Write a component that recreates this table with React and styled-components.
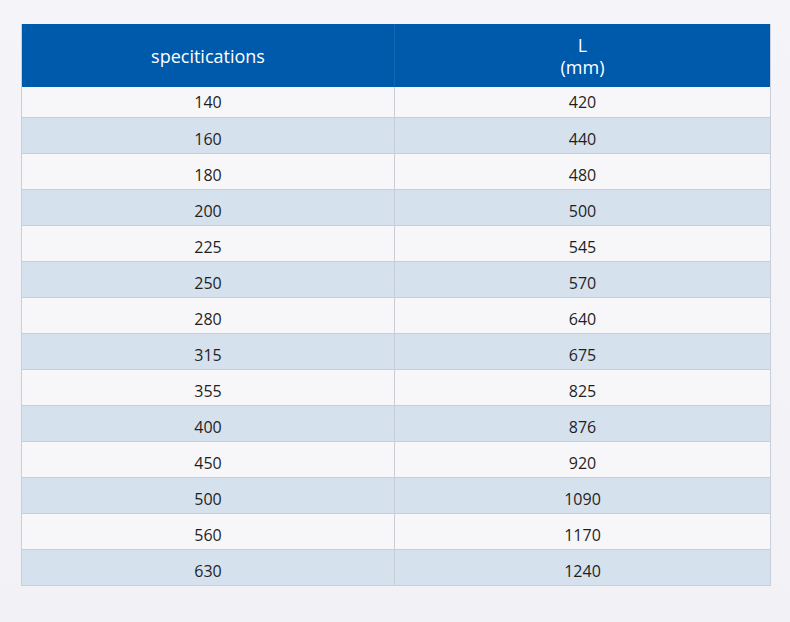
import React from "react";
import styled, { createGlobalStyle } from "styled-components";

const Global = createGlobalStyle`
  html, body { margin: 0; padding: 0; }
  body {
    background: linear-gradient(180deg, #f5f5f9 0%, #f1f1f6 100%);
    font-family: "Open Sans", "Noto Sans", sans-serif;
    width: 790px;
    height: 622px;
    overflow: hidden;
  }
`;

const Page = styled.div`
  padding: 24px 0 0 21px;
`;

const Table = styled.table`
  width: 750px;
  border-collapse: collapse;
  table-layout: fixed;
  border: 1px solid #c9ced8;
  border-top: none;
`;

const HeadCell = styled.th`
  background: #005aab;
  color: #ffffff;
  font-weight: 400;
  font-size: 18px;
  line-height: 22px;
  height: 63px;
  padding: 0;
  text-align: center;
  border-left: 1px solid #1467b3;
  &:first-child { border-left: none; }
`;

const Row = styled.tr`
  background: ${(p) => (p.$alt ? "#d6e1ee" : "#f7f7fa")};
  border-top: 1px solid #c8cdd6;
  &:first-child { border-top: none; }
`;

const Cell = styled.td`
  height: ${(p) => (p.$first ? "30px" : "28px")};
  padding: ${(p) => (p.$first ? "0" : "7px 0 0")};
  text-align: center;
  font-size: 16px;
  line-height: 22px;
  color: #1f1f1f;
  border-left: 1px solid #c8cdd6;
  &:first-child { border-left: none; }
`;

const data = [
  ["140", "420"],
  ["160", "440"],
  ["180", "480"],
  ["200", "500"],
  ["225", "545"],
  ["250", "570"],
  ["280", "640"],
  ["315", "675"],
  ["355", "825"],
  ["400", "876"],
  ["450", "920"],
  ["500", "1090"],
  ["560", "1170"],
  ["630", "1240"],
];

export default function App() {
  return (
    <Page>
      <Global />
      <Table>
        <colgroup>
          <col style={{ width: "373px" }} />
          <col />
        </colgroup>
        <thead>
          <tr>
            <HeadCell>specitications</HeadCell>
            <HeadCell>
              L<br />(mm)
            </HeadCell>
          </tr>
        </thead>
        <tbody>
          {data.map(([a, b], i) => (
            <Row key={a} $alt={i % 2 === 1}>
              <Cell $first={i === 0}>{a}</Cell>
              <Cell $first={i === 0}>{b}</Cell>
            </Row>
          ))}
        </tbody>
      </Table>
    </Page>
  );
}
